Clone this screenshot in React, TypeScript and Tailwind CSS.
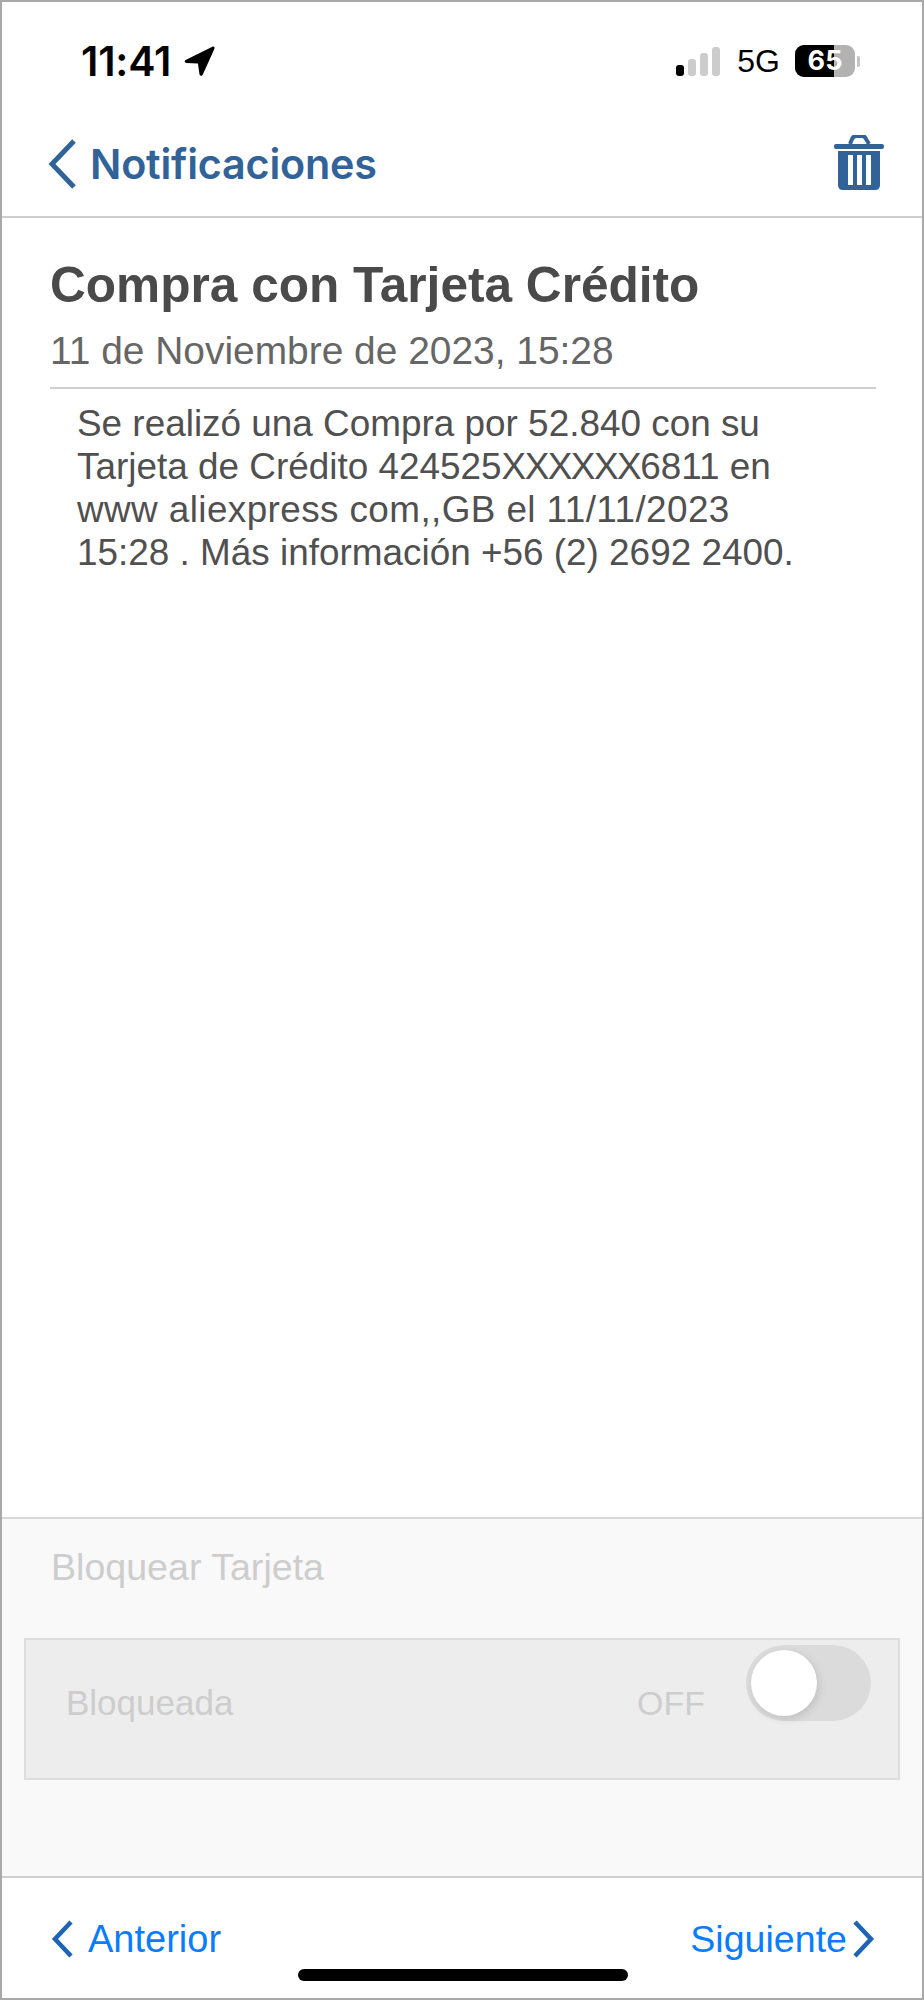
import React from "react";

const sans = "font-['Liberation_Sans',Arial,sans-serif]";
const ui = "font-['Inter','Liberation_Sans',sans-serif]";

function StatusBar() {
  return (
    <div className="h-[95px] flex items-start justify-between pt-[38px] pl-[79px] pr-[62px]">
      <div className="flex items-center gap-[12px]">
        <span className={`${ui} text-[41px] leading-[42px] font-semibold text-black tracking-[-0.2px]`}>11:41</span>
        <svg width="33" height="33" viewBox="0 0 32 32" className="mt-[-2px]">
          <path d="M2.5 15.5 L29 2.5 Q31 2 30.5 4.5 L19 30 Q17 32 16 29.5 L14.5 19 L3 18.5 Q0.5 17 2.5 15.5 Z" fill="#000" />
        </svg>
      </div>
      <div className="flex items-center mt-[5px]">
        <div className="flex items-end gap-[4px] h-[30px] mr-[16px]">
          <span className="w-[8px] h-[11px] rounded-[3px] bg-black" />
          <span className="w-[8px] h-[17px] rounded-[3px] bg-[#cccccc]" />
          <span className="w-[8px] h-[23px] rounded-[3px] bg-[#cccccc]" />
          <span className="w-[8px] h-[29px] rounded-[3px] bg-[#cccccc]" />
        </div>
        <span className={`${sans} text-[32px] leading-[32px] text-black mr-[15px] ml-[1px]`}>5G</span>
        <div className="relative w-[60px] h-[32px] rounded-[9px] overflow-hidden bg-[#b2b2b2] flex items-center justify-center">
          <div className="absolute left-0 top-0 bottom-0 w-[39px] bg-black" />
          <span className={`${ui} relative text-[27px] leading-[32px] font-bold text-white`}>65</span>
        </div>
        <span className="ml-[2px] w-[3px] h-[11px] rounded-r-[2px] bg-[#c4c4c4]" />
      </div>
    </div>
  );
}

function NavBar() {
  return (
    <div className="h-[121px] flex items-start justify-between border-b-2 border-[#cfcfcf] pl-[46px] pr-[38px]">
      <div className="flex items-center mt-[41px]">
        <svg width="30" height="52" viewBox="0 0 30 52" fill="none">
          <path d="M26 3 L4 26 L26 49" stroke="#316399" strokeWidth="5" />
        </svg>
        <span className={`${ui} ml-[12px] text-[41.3px] leading-[48px] font-semibold text-[#316399] tracking-[-0.2px]`}>Notificaciones</span>
      </div>
      <svg width="50" height="56" viewBox="0 0 50 56" className="mt-[38px]">
        <path d="M16 9 L18 4 Q19 1 23 1 L28 1 Q31 1 32 4 L35 9" fill="none" stroke="#316399" strokeWidth="4" />
        <rect x="0" y="9" width="50" height="5" rx="2" fill="#316399" />
        <path d="M4 16 H46 V50 Q46 55 41 55 H9 Q4 55 4 50 Z" fill="#316399" />
        <rect x="14" y="20" width="5" height="30" fill="#fff" />
        <rect x="23" y="20" width="5" height="30" fill="#fff" />
        <rect x="32" y="20" width="5" height="30" fill="#fff" />
      </svg>
    </div>
  );
}

function Message() {
  return (
    <div className={`${sans} flex-1 pl-[48px] pr-[46px] pt-[41px]`}>
      <h1 className="text-[49.6px] leading-[52px] font-bold text-[#4a4a4a]">Compra con Tarjeta Crédito</h1>
      <p className="mt-[17px] text-[38.9px] leading-[46px] text-[#666666] pb-[13px] border-b-2 border-[#cfcfcf]">
        11 de Noviembre de 2023, 15:28
      </p>
      <p className="mt-[13px] pl-[27px] text-[36.9px] leading-[43px] text-[#505050]">
        Se realizó una Compra por 52.840 con su
        <br />
        Tarjeta de Crédito 424525<span className="tracking-[-1.5px]">XXXXXX</span>6811 en
        <br />
        <span className="tracking-[0.4px]">www aliexpress com,,GB el 11/11/2023</span>
        <br />
        15:28 . Más información +56 (2) 2692 2400.
      </p>
    </div>
  );
}

function BlockCard() {
  return (
    <div className={`${sans} h-[361px] bg-[#f9f9f9] border-t-2 border-b-2 border-[#d9d9d9] border-b-[#cfcfcf]`}>
      <p className="pl-[49px] pt-[28px] text-[37.6px] leading-[40px] text-[#cdcdcd]">Bloquear Tarjeta</p>
      <div className="relative mt-[51px] mx-[22px] h-[142px] bg-[#eeedee] border-2 border-[#dddddd] flex items-center">
        <span className="ml-[40px] mt-[-13px] text-[35px] leading-[40px] text-[#cdcdcd]">Bloqueada</span>
        <span className="ml-auto mr-[193px] mt-[-13px] text-[34px] leading-[40px] text-[#cdcdcd]">OFF</span>
        <div className="absolute right-[27px] top-[5px] w-[125px] h-[76px] rounded-full bg-[#dcdbdc]">
          <div className="absolute left-[5px] top-[5px] w-[66px] h-[66px] rounded-full bg-white shadow-[2px_3px_8px_rgba(0,0,0,0.12)]" />
        </div>
      </div>
    </div>
  );
}

function Footer() {
  return (
    <div className={`${sans} relative h-[120px] flex items-start justify-between pl-[48px] pr-[46px] pt-[41px]`}>
      <div className="flex items-center">
        <svg width="24" height="38" viewBox="0 0 24 38" fill="none">
          <path d="M21 2 L5 19 L21 36" stroke="#1e63b4" strokeWidth="4.5" />
        </svg>
        <span className="ml-[14px] text-[38px] leading-[40px] text-[#0a7cff]">Anterior</span>
      </div>
      <div className="flex items-center">
        <span className="mr-[5px] text-[37.6px] leading-[40px] text-[#0a7cff]">Siguiente</span>
        <svg width="24" height="38" viewBox="0 0 24 38" fill="none">
          <path d="M3 2 L19 19 L3 36" stroke="#1e63b4" strokeWidth="4.5" />
        </svg>
      </div>
      <div className="absolute left-[296px] bottom-[17px] w-[330px] h-[12px] rounded-full bg-black" />
    </div>
  );
}

export default function App() {
  return (
    <div className="w-[924px] h-[2000px] flex flex-col bg-white border-2 border-[#a9a9a9] overflow-hidden">
      <StatusBar />
      <NavBar />
      <Message />
      <BlockCard />
      <Footer />
    </div>
  );
}
